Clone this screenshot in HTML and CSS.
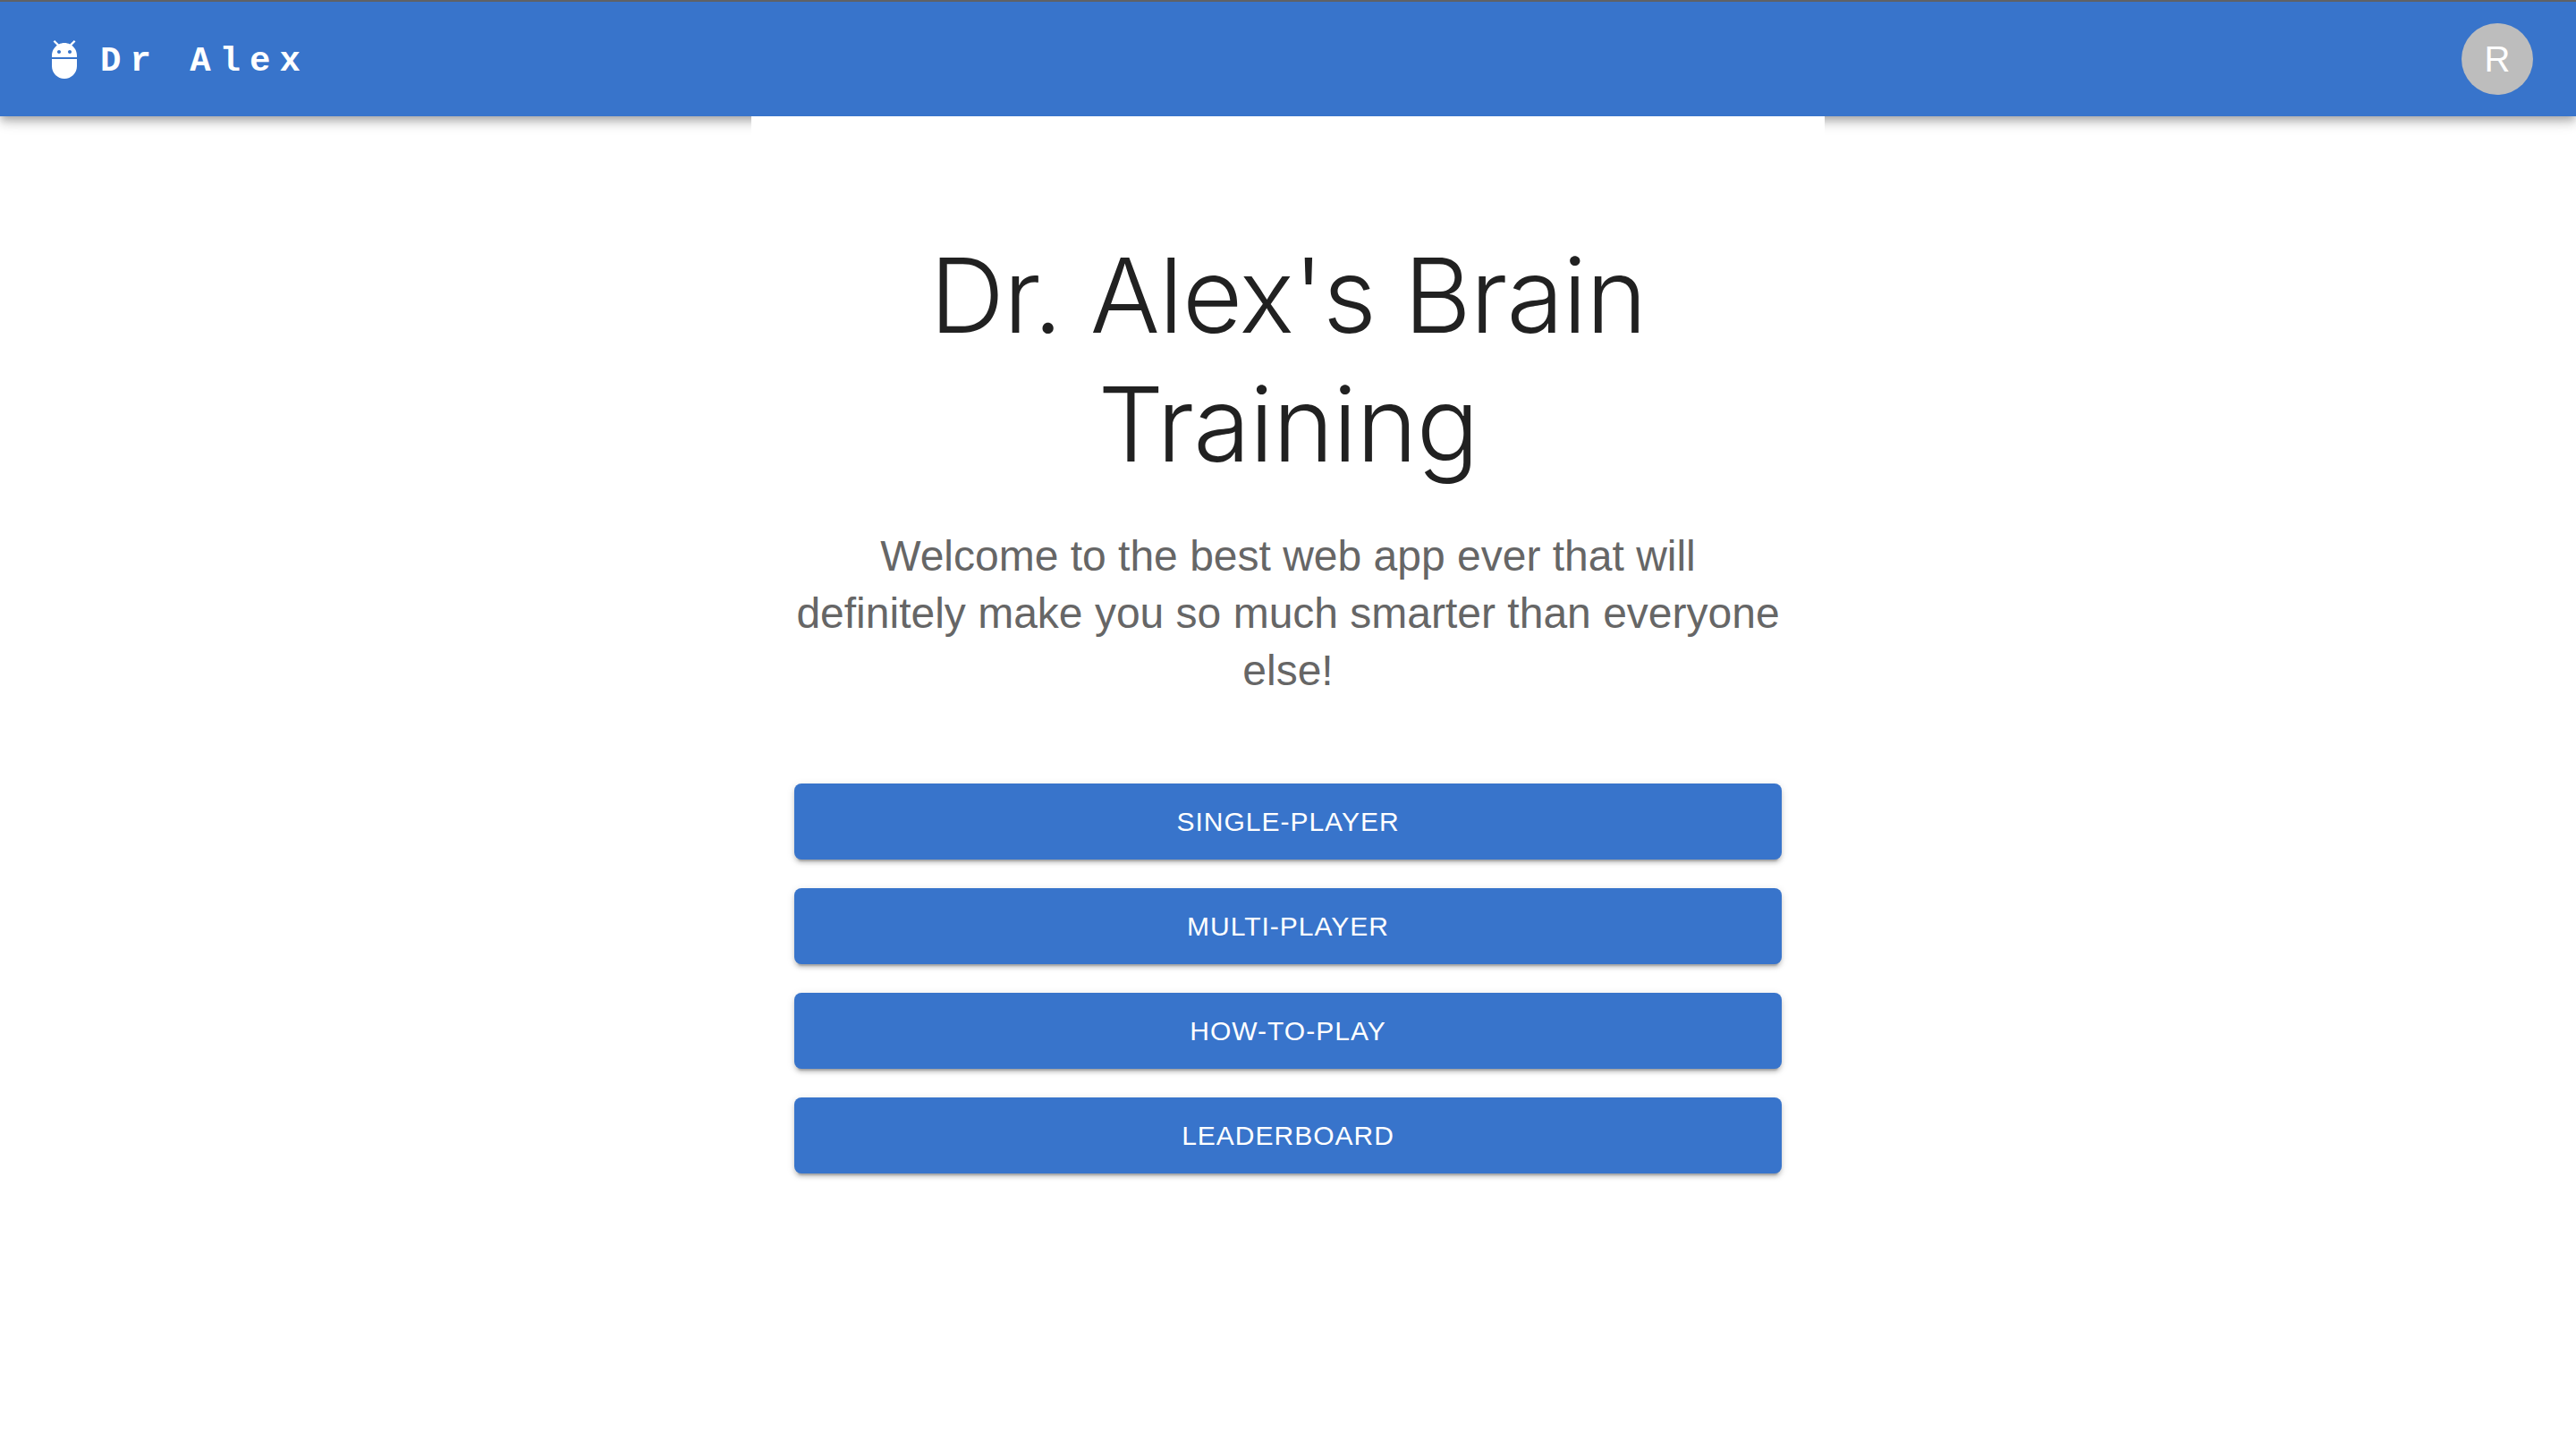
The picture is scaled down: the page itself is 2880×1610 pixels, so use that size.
FILE: index.html
```html
<!DOCTYPE html>
<html lang="en">
<head>
  <meta charset="utf-8">
  <meta name="viewport" content="width=device-width, initial-scale=1">
  <title>Dr. Alex's Brain Training</title>
  <link rel="stylesheet" href="styles.css">
</head>
<body>
  <header class="app-bar">
    <a class="brand" href="#">
      <svg class="brand-icon" viewBox="0 0 24 24" aria-hidden="true">
        <path d="M5 16c0 3.87 3.13 7 7 7s7-3.13 7-7v-4H5v4zM16.12 4.37l2.1-2.1-.82-.83-2.3 2.31C14.16 3.28 13.12 3 12 3s-2.16.28-3.09.75L6.6 1.44l-.82.83 2.1 2.1C6.14 5.64 5 7.68 5 10v1h14v-1c0-2.32-1.14-4.36-2.88-5.63zM9 9c-.55 0-1-.45-1-1s.45-1 1-1 1 .45 1 1-.45 1-1 1zm6 0c-.55 0-1-.45-1-1s.45-1 1-1 1 .45 1 1-.45 1-1 1z"/>
      </svg>
      <span class="brand-name">Dr Alex</span>
    </a>
    <button class="avatar" type="button" aria-label="Open account menu">R</button>
  </header>
  <main class="hero">
    <h1 class="hero-title">Dr. Alex's Brain Training</h1>
    <p class="hero-text">Welcome to the best web app ever that will definitely make you so much smarter than everyone else!</p>
    <div class="menu">
      <button class="menu-button" type="button">Single-Player</button>
      <button class="menu-button" type="button">Multi-Player</button>
      <button class="menu-button" type="button">How-To-Play</button>
      <button class="menu-button" type="button">Leaderboard</button>
    </div>
  </main>
</body>
</html>
```
FILE: styles.css
```css
* {
  box-sizing: border-box;
}

body {
  margin: 0;
  background: #fff;
  color: #212121;
  font-family: "Liberation Sans", Arial, sans-serif;
}

.app-bar {
  display: flex;
  align-items: center;
  justify-content: space-between;
  min-height: 130px;
  padding: 0 48px;
  border-top: 2px solid #5f6165;
  background: #3874cb;
  color: #fff;
  box-shadow:
    0 4px 8px -2px rgba(0, 0, 0, 0.2),
    0 8px 10px 0 rgba(0, 0, 0, 0.14),
    0 2px 20px 0 rgba(0, 0, 0, 0.12);
}

.brand {
  display: flex;
  align-items: center;
  gap: 16px;
  color: inherit;
  text-decoration: none;
}

.brand-icon {
  width: 48px;
  height: 48px;
  fill: currentColor;
}

.brand-name {
  padding-top: 6px;
  font-family: "Liberation Mono", monospace;
  font-size: 39px;
  font-weight: 700;
  line-height: 64px;
  letter-spacing: 10px;
}

.avatar {
  width: 80px;
  height: 80px;
  padding: 0;
  border: 0;
  border-radius: 50%;
  background: #bdbdbd;
  color: #fff;
  font: inherit;
  font-size: 40px;
  line-height: 80px;
  cursor: pointer;
}

.hero {
  max-width: 1200px;
  margin: 0 auto;
  padding: 128px 48px 96px;
  background: #fff;
  text-align: center;
}

.hero-title {
  margin: 0 0 44px;
  font-family: Inter, "Liberation Sans", sans-serif;
  font-size: 116px;
  font-weight: 300;
  line-height: 144px;
  letter-spacing: -1px;
}

.hero-text {
  margin: 0;
  color: #666;
  font-size: 48px;
  line-height: 64px;
}

.menu {
  display: grid;
  gap: 32px;
  padding-top: 94px;
}

.menu-button {
  padding: 16px;
  border: 0;
  border-radius: 8px;
  background: #3874cb;
  color: #fff;
  font: inherit;
  font-size: 30px;
  line-height: 53px;
  letter-spacing: 1px;
  text-transform: uppercase;
  cursor: pointer;
  box-shadow:
    0 6px 2px -4px rgba(0, 0, 0, 0.2),
    0 4px 4px 0 rgba(0, 0, 0, 0.14),
    0 2px 10px 0 rgba(0, 0, 0, 0.12);
}
```
